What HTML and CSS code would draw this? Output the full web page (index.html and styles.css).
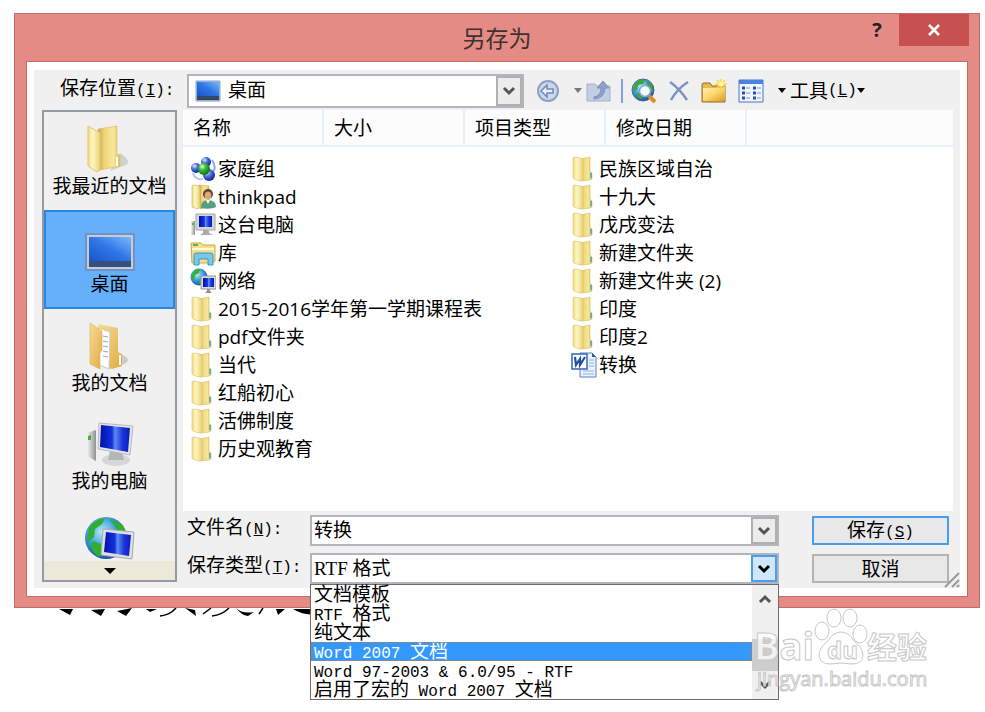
FILE: index.html
```html
<!DOCTYPE html>
<html lang="zh-CN">
<head>
  <meta charset="utf-8">
  <title>另存为</title>
  <link rel="stylesheet" href="styles.css">
</head>
<body>
  <!-- shared icons -->
  <svg class="defs" width="0" height="0" aria-hidden="true">
    <defs>
      <linearGradient id="gold" x1="0" x2="1" y1="0" y2="0">
        <stop offset="0" stop-color="#c9a544"/>
        <stop offset=".3" stop-color="#eed67c"/>
        <stop offset=".7" stop-color="#f8e79c"/>
        <stop offset="1" stop-color="#dfbd4e"/>
      </linearGradient>
      <linearGradient id="leaf" x1="0" x2="1" y1="0" y2="0">
        <stop offset="0" stop-color="#f3dc86"/>
        <stop offset=".4" stop-color="#fdf5c4"/>
        <stop offset="1" stop-color="#ecd374"/>
      </linearGradient>
      <linearGradient id="tan" x1="0" x2="1" y1="0" y2="1">
        <stop offset="0" stop-color="#f8dc92"/>
        <stop offset="1" stop-color="#e0ac45"/>
      </linearGradient>
      <linearGradient id="screen" x1="0" x2="1" y1="1" y2="0">
        <stop offset="0" stop-color="#1c55c4"/>
        <stop offset=".5" stop-color="#2e76e6"/>
        <stop offset="1" stop-color="#7db8fa"/>
      </linearGradient>
      <linearGradient id="blue" x1="0" x2="1" y1="0" y2="0">
        <stop offset="0" stop-color="#0212a8"/>
        <stop offset=".4" stop-color="#1430e0"/>
        <stop offset=".5" stop-color="#5f8af4"/>
        <stop offset=".75" stop-color="#1a35dc"/>
        <stop offset="1" stop-color="#0a1cb8"/>
      </linearGradient>
      <linearGradient id="metal" x1="0" x2="1" y1="0" y2="0">
        <stop offset="0" stop-color="#f4f4f4"/>
        <stop offset="1" stop-color="#8d9093"/>
      </linearGradient>
      <linearGradient id="amber" x1="0" x2="1" y1="0" y2="1">
        <stop offset="0" stop-color="#fff0b4"/>
        <stop offset=".5" stop-color="#fbd468"/>
        <stop offset="1" stop-color="#d99a24"/>
      </linearGradient>
      <radialGradient id="ball" cx=".35" cy=".3" r=".75">
        <stop offset="0" stop-color="#e2ecff"/>
        <stop offset=".4" stop-color="#5274dd"/>
        <stop offset="1" stop-color="#0b1f8c"/>
      </radialGradient>
      <radialGradient id="greenball" cx=".35" cy=".3" r=".75">
        <stop offset="0" stop-color="#e0ffd8"/>
        <stop offset=".4" stop-color="#38b838"/>
        <stop offset="1" stop-color="#087008"/>
      </radialGradient>
      <radialGradient id="sea" cx=".4" cy=".35" r=".7">
        <stop offset="0" stop-color="#b5eafa"/>
        <stop offset=".5" stop-color="#3c9edb"/>
        <stop offset="1" stop-color="#164a98"/>
      </radialGradient>
    </defs>
    <symbol id="i-folder" viewBox="0 0 26 26">
      <path d="M9 3 19 1v14l2 2v6l-2 1-9 1z" fill="url(#gold)" stroke="#d8ba58" stroke-width=".6"/>
      <path d="M2 2q0-1 2-1l6 1q2 1 2 3v17q0 3-3 3l-6-2q-1 0-1-2z" fill="url(#leaf)" stroke="#dcc263" stroke-width=".6"/>
      <path d="M20 17v5" stroke="#4ba9c4" stroke-width="1.6"/>
    </symbol>
    <symbol id="i-user" viewBox="0 0 26 26">
      <path d="M9 3 9 1l10 1v20l-9 3z" fill="url(#gold)" stroke="#c9ae55" stroke-width=".6"/>
      <path d="M2 2q0-1 2-1l6 1v20l-2 3-6-2z" fill="url(#leaf)" stroke="#c9ae55" stroke-width=".6"/>
      <circle cx="18" cy="10" r="5" fill="#5b4632"/>
      <ellipse cx="18" cy="11.500" rx="3.300" ry="4" fill="#dba67a"/>
      <path d="M11 24c0-6 3-8 7-8s8 2 8 7c-4 2-10 2-15 1z" fill="#579f80"/>
      <path d="M16 16l2 4 2-4z" fill="#fff"/>
    </symbol>
    <symbol id="i-home" viewBox="0 0 26 26">
      <circle cx="16" cy="6" r="5" fill="url(#ball)"/>
      <circle cx="6" cy="12" r="5" fill="url(#ball)"/>
      <circle cx="19" cy="19" r="6" fill="url(#ball)"/>
      <path d="M3 17c1 5 6 7 10 6" fill="none" stroke="#b6c8ec" stroke-width="2"/>
      <circle cx="14" cy="13" r="6" fill="url(#greenball)"/>
      <path d="M22 4c3 4 3 8 2 11" fill="none" stroke="#8ca3df" stroke-width="2"/>
    </symbol>
    <symbol id="i-pc" viewBox="0 0 26 26">
      <path d="M1 9h4v14H1z" fill="url(#metal)"/>
      <path d="M2 11h2v2H2z" fill="#35c935"/>
      <path d="M6 2h19v16H6z" fill="#d4d6d8" stroke="#a3a6a9"/>
      <path d="M9 4h13v11H9z" fill="url(#blue)"/>
      <path d="M13 18h6v3l4 2H10l3-2z" fill="#a9acaf"/>
    </symbol>
    <symbol id="i-lib" viewBox="0 0 26 26">
      <path d="M1 3h10l2 2h12v16l-3 2H2z" fill="#f3df8e" stroke="#c9a84a"/>
      <path d="M3 5h5" stroke="#4fb54f" stroke-width="2"/>
      <path d="M2 9h22" stroke="#fff8d6" stroke-width="2"/>
      <path d="M4 25V15q0-2 2-2h14q3 0 3 2v10h-5v-6H9v6z" fill="#76c7e8" stroke="#3a98c4"/>
    </symbol>
    <symbol id="i-net" viewBox="0 0 26 26">
      <circle cx="9" cy="9" r="8.500" fill="url(#sea)"/>
      <path d="M3 4q3-4 7-3l-1 4-4 2-1 5-3-1zM10 10l5-1 2 4-4 5-4-3z" fill="#31b331"/>
      <path d="M11 8h15v13H11z" fill="#d9dadc" stroke="#999"/>
      <path d="M13 10h11v9H13z" fill="url(#blue)"/>
      <path d="M17 21h3v2l2 2h-7l2-2z" fill="#8f9296"/>
    </symbol>
    <symbol id="i-word" viewBox="0 0 26 26">
      <path d="M9 1h12l4 4v20H9z" fill="#eaf2fd" stroke="#5a7fc0"/>
      <path d="M21 1v4h4z" fill="#355a9e"/>
      <path d="M18 8h5M18 11h5M18 14h5M12 19h11M12 22h11" stroke="#8fb2e3"/>
      <path d="M1 2h15v15H1z" fill="#fff" stroke="#3666b8" stroke-width="1.500"/>
      <path d="M4 5l1 8 4-6v6l5-8" fill="none" stroke="#21509f" stroke-width="2.200"/>
    </symbol>
    <symbol id="i-desk" viewBox="0 0 26 22">
      <path d="M1 1h24v20H1z" fill="#a9bdd6" stroke="#86a2c6"/>
      <path d="M2 2h22v14H2z" fill="url(#screen)"/>
      <path d="M2 16h22v4H2z" fill="#344965"/>
    </symbol>
    <symbol id="i-down" viewBox="0 0 16 12">
      <path d="M3 3l5 5 5-5" fill="none" stroke="currentColor" stroke-width="3"/>
    </symbol>
    <symbol id="i-tri" viewBox="0 0 8 6">
      <path d="M0 0h8L4 5z" fill="currentColor"/>
    </symbol>
  </svg>

  <svg class="page-ink" viewBox="0 0 256 20" aria-hidden="true">
    <path d="M0 9l11 6 3-6zM32 10l10 6 4-7zM58 11l9 5 6-8zM87 9l4 3 7-3zM126 8l10 2 1 6zM177 8q6 6 18 4l-6 4q-7-1-12-8zM217 9h9l-7 6zM234 9h22v5q-11 2-22-5z"/>
    <path d="M101 16q10-1 16-8M144 14l8-6M153 16q10-1 17-8M200 14l4-6" fill="none" stroke="#000" stroke-width="1.500"/>
  </svg>

  <main class="dialog">
    <header class="titlebar">
      <h1>另存为</h1>
      <div class="controls">
        <button class="help" aria-label="帮助">?</button>
        <button class="close" aria-label="关闭">
          <svg width="14" height="14" viewBox="0 0 14 14"><path d="M2 2l10 10M12 2L2 12" stroke="#fff" stroke-width="2.500"/></svg>
        </button>
      </div>
    </header>

    <div class="client">
      <form class="panel" onsubmit="return false">
        <div class="top">
          <label for="place">保存位置<span class="en">(<u>I</u>):</span></label>
          <div class="combo place">
            <svg class="place-icon" width="26" height="22"><use href="#i-desk"/></svg>
            <select id="place"><option>桌面</option></select>
            <span class="arrow"><svg width="16" height="12"><use href="#i-down"/></svg></span>
          </div>
          <div class="toolbar">
            <button aria-label="后退" class="back">
              <svg width="24" height="24" viewBox="0 0 24 24">
                <circle cx="12" cy="12" r="10" fill="#cdd7ea" stroke="#8b9fc8" stroke-width="2"/>
                <path d="M5 12l6-6v4h6v4h-6v4z" fill="#e9eef7" stroke="#6f87ba" stroke-width="1.500"/>
              </svg>
            </button>
            <svg class="tri gray" width="8" height="6"><use href="#i-tri"/></svg>
            <button aria-label="向上一级">
              <svg width="26" height="24" viewBox="0 0 26 24">
                <path d="M1 5h8l2 2h13v15H1z" fill="#c3cee3" stroke="#a0b0cf"/>
                <path d="M8 18q7-1 7-9h-4l6-7 6 7h-4q0 10-11 11z" fill="#8da1c8" stroke="#7f93be"/>
              </svg>
            </button>
            <i class="sep"></i>
            <button aria-label="搜索网页" class="search">
              <svg width="26" height="26" viewBox="0 0 26 26">
                <circle cx="12" cy="12" r="11" fill="url(#sea)" stroke="#546a8c"/>
                <path d="M4 5q6-5 10-3l-2 4-5 1-1 5-4 1zM16 3l5 4 1 7-4-2-2-4zM6 15l5 1v5l-4-1z" fill="#3ca53c"/>
                <path d="M18 18l6 6" stroke="#dc8e2c" stroke-width="4"/>
                <circle cx="14" cy="13" r="5.500" fill="#f2faff" stroke="#8baac2" stroke-width="1.500"/>
              </svg>
            </button>
            <button aria-label="删除" class="del">
              <svg width="22" height="22" viewBox="0 0 22 22"><path d="M2 2q9 6 17 18M20 2Q9 9 3 20" fill="none" stroke="#7b93c4" stroke-width="2.500"/></svg>
            </button>
            <button aria-label="新建文件夹" class="new">
              <svg width="26" height="24" viewBox="0 0 26 24">
                <path d="M1 6q0-2 2-2h6l2 3h13v16H1z" fill="#e9b94b" stroke="#8d6c22"/>
                <path d="M2 9h22v13H2z" fill="url(#amber)"/>
                <path d="M20 0v11M14 5h12M16 1l8 8M24 1l-8 8" stroke="#ffd62e" stroke-width="1.500"/>
                <circle cx="20" cy="5" r="2.500" fill="#fff7a8"/>
              </svg>
            </button>
            <button aria-label="视图" class="views">
              <svg width="26" height="24" viewBox="0 0 26 24">
                <path d="M1 1h24v22H1z" fill="#eff5ff" stroke="#4b74c8"/>
                <path d="M1 1h24v4H1z" fill="#4a82e6"/>
                <path d="M4 9h3M4 14h3M4 19h3M15 9h3M15 14h3M15 19h3" stroke="#2b50a8" stroke-width="3"/>
                <path d="M8 9h4M8 14h4M8 19h4M19 9h4M19 14h4M19 19h4" stroke="#8a95ab"/>
              </svg>
            </button>
            <svg class="tri" width="8" height="6"><use href="#i-tri"/></svg>
            <button class="tools">工具<span class="en">(<u>L</u>)</span><svg width="8" height="6"><use href="#i-tri"/></svg></button>
          </div>
        </div>

        <div class="middle">
          <nav class="places">
            <button class="item">
              <svg width="48" height="48" viewBox="0 0 48 48">
                <path d="M24 46l10-18q12 8 6 12z" fill="#bbb" opacity=".6"/>
                <path d="M12 4l19-3v28l3 1v11l-20 4z" fill="url(#gold)" stroke="#d6bb5e" stroke-width=".6"/>
                <path d="M2 1l12 7v37l-3 2L2 41z" fill="url(#leaf)" stroke="#dfc871"/>
                <path d="M31 32v9" stroke="#fff" stroke-width="2"/>
              </svg>
              <span>我最近的文档</span>
            </button>
            <button class="item selected">
              <svg width="50" height="48" viewBox="0 0 50 48">
                <path d="M1 11h48v36H1z" fill="#c6cbd4" stroke="#6f93c4" stroke-width="2"/>
                <path d="M4 14h42v24H4z" fill="url(#screen)"/>
                <path d="M4 38h42v6H4z" fill="#35507e"/>
              </svg>
              <span>桌面</span>
            </button>
            <button class="item">
              <svg width="48" height="48" viewBox="0 0 48 48">
                <path d="M28 46l6-14q12 4 6 9z" fill="#bbb" opacity=".7"/>
                <path d="M12 2l20 4v24l4 2v12l-10 3-12-4z" fill="url(#tan)"/>
                <path d="M13 6l11 4-1 37-10-4z" fill="#fff" stroke="#ccc"/>
                <path d="M17 14l5 1M17 19l5 1M17 24l5 1M17 29l5 1M17 34l5 1" stroke="#9aa3b3"/>
                <path d="M4 1l12 8v19l-2 3v16L4 42z" fill="url(#tan)" stroke="#d9b05a" stroke-width=".6"/>
                <path d="M34 33v10" stroke="#fff" stroke-width="2"/>
              </svg>
              <span>我的文档</span>
            </button>
            <button class="item">
              <svg width="48" height="48" viewBox="0 0 48 48">
                <path d="M1 13l9-3v31l-9-5z" fill="url(#metal)"/>
                <path d="M2 16l3-1v5H2z" fill="#3bb62e"/>
                <ellipse cx="30" cy="40" rx="14" ry="6" fill="#d5d7d9"/>
                <path d="M24 31h12l2 9H22z" fill="#b4b7ba"/>
                <path d="M13 3l34 3-3 29-32-6z" fill="#e1e2e4" stroke="#b9bbbe"/>
                <path d="M15 5l29 3-2 24-28-5z" fill="url(#blue)"/>
              </svg>
              <span>我的电脑</span>
            </button>
            <button class="item last" aria-label="网上邻居">
              <svg width="50" height="48" viewBox="0 0 50 48">
                <circle cx="21" cy="22" r="21" fill="url(#sea)"/>
                <path d="M4 12Q10 3 20 2l-3 6-7 5-1 8-7 6zM24 3l14 6 3 9-8-3-4-6zM8 25l8 3 2 9-4 4Q7 36 6 30z" fill="#2fae2f"/>
                <path d="M18 13l31 3-2 27-31-4z" fill="#dedfe2" stroke="#a7a9ae"/>
                <path d="M21 16l25 3-2 21-25-4z" fill="url(#blue)"/>
              </svg>
            </button>
            <button class="more" aria-label="更多"><svg width="12" height="8" viewBox="0 0 12 8"><path d="M0 1h12L6 7z"/></svg></button>
          </nav>

          <div class="main">
            <div class="files">
              <div class="cols">
                <span>名称</span>
                <span>大小</span>
                <span>项目类型</span>
                <span>修改日期</span>
              </div>
              <ul class="list">
                <li><svg><use href="#i-home"/></svg>家庭组</li>
                <li><svg><use href="#i-user"/></svg>thinkpad</li>
                <li><svg><use href="#i-pc"/></svg>这台电脑</li>
                <li><svg><use href="#i-lib"/></svg>库</li>
                <li><svg><use href="#i-net"/></svg>网络</li>
                <li><svg><use href="#i-folder"/></svg>2015-2016学年第一学期课程表</li>
                <li><svg><use href="#i-folder"/></svg>pdf文件夹</li>
                <li><svg><use href="#i-folder"/></svg>当代</li>
                <li><svg><use href="#i-folder"/></svg>红船初心</li>
                <li><svg><use href="#i-folder"/></svg>活佛制度</li>
                <li><svg><use href="#i-folder"/></svg>历史观教育</li>
                <li><svg><use href="#i-folder"/></svg>民族区域自治</li>
                <li><svg><use href="#i-folder"/></svg>十九大</li>
                <li><svg><use href="#i-folder"/></svg>戊戌变法</li>
                <li><svg><use href="#i-folder"/></svg>新建文件夹</li>
                <li><svg><use href="#i-folder"/></svg>新建文件夹 (2)</li>
                <li><svg><use href="#i-folder"/></svg>印度</li>
                <li><svg><use href="#i-folder"/></svg>印度2</li>
                <li><svg><use href="#i-word"/></svg>转换</li>
              </ul>
            </div>

            <div class="fields">
              <label for="filename">文件名<span class="en">(<u>N</u>):</span></label>
              <div class="combo">
                <input type="text" id="filename" value="转换">
                <span class="arrow"><svg width="16" height="12"><use href="#i-down"/></svg></span>
              </div>
              <button class="btn default">保存<span class="en">(<u>S</u>)</span></button>

              <label for="filetype">保存类型<span class="en">(<u>T</u>):</span></label>
              <div class="combo open">
                <select id="filetype"><option>RTF 格式</option></select>
                <span class="arrow"><svg width="16" height="12"><use href="#i-down"/></svg></span>
                <div class="dropdown">
                  <ul role="listbox" aria-label="保存类型">
                    <li role="option">文档模板</li>
                    <li role="option"><span class="en">RTF </span>格式</li>
                    <li role="option">纯文本</li>
                    <li role="option" class="active" aria-selected="true"><span class="en">Word 2007 </span>文档</li>
                    <li role="option"><span class="en">Word 97-2003 &amp; 6.0/95 - RTF</span></li>
                    <li role="option">启用了宏的<span class="en"> Word 2007 </span>文档</li>
                  </ul>
                  <div class="scroll">
                    <svg class="up" width="16" height="12"><use href="#i-down"/></svg>
                    <i class="thumb"></i>
                    <svg width="16" height="12"><use href="#i-down"/></svg>
                  </div>
                </div>
              </div>
              <button class="btn">取消</button>
            </div>
          </div>
        </div>
        <svg class="grip" width="16" height="16" viewBox="0 0 16 16"><path d="M1 15L15 1M8 15l7-7M13 15l2-2" stroke="#999" stroke-width="2"/></svg>
      </form>
    </div>
  </main>

  <svg class="watermark" width="184" height="88" viewBox="0 0 184 88">
    <g class="mark">
      <text x="1" y="54" class="bai">Bai</text>
      <ellipse cx="69" cy="25" rx="7" ry="9"/>
      <ellipse cx="81" cy="12" rx="7" ry="9"/>
      <ellipse cx="97" cy="12" rx="7" ry="9"/>
      <ellipse cx="107" cy="28" rx="7" ry="9"/>
      <path d="M88 26q8 0 13 9 9 7 9 15-1 8-11 8-11-2-22 0-10 0-11-9 0-7 9-14 5-9 13-9z"/>
      <text x="74" y="53" class="du">du</text>
      <text x="114" y="52" class="jy">经验</text>
      <text x="4" y="80" class="url">jingyan.baidu.com</text>
    </g>
  </svg>
</body>
</html>
```
FILE: styles.css
```css
* {
  box-sizing: border-box;
}
body {
  position: relative;
  min-height: 100vh;
  margin: 0;
  padding: 13px 5px 0 14px;
  background-color: white;
  color: black;
  font-family: "Open Sans", "Noto Sans CJK SC", sans-serif;
  font-size: 19px;
  line-height: 28px;
}
button, input, select {
  margin: 0;
  padding: 0;
  border: none;
  background: none;
  color: inherit;
  font: inherit;
}
ul {
  list-style: none;
  margin: 0;
  padding: 0;
}
svg {
  display: block;
  flex: none;
}
.defs {
  position: absolute;
}
.en {
  font-family: "Liberation Mono", monospace;
  font-size: 16px;
  white-space: pre;
}

/* window */
.dialog {
  position: relative;
  border: 1px solid #c06c6a;
  background-color: #e48b86;
  padding: 0 11px 10px;
}
.titlebar {
  display: grid;
  grid-template-columns: 1fr auto 1fr;
  align-items: center;
  height: 47px;
}
.titlebar h1 {
  grid-column: 2;
  margin: 0;
  font-size: 23px;
  font-weight: normal;
  color: #40302f;
}
.controls {
  display: flex;
  align-self: start;
  justify-content: flex-end;
  height: 32px;
  margin-right: -1px;
}
.help {
  width: 44px;
  font-size: 20px;
  font-weight: bold;
  color: #222;
}
.close {
  display: flex;
  align-items: center;
  justify-content: center;
  width: 70px;
  background-color: #c75050;
}
.client {
  border: 1px solid #c86966;
  background-color: white;
  padding: 8px 7px;
}
.panel {
  position: relative;
  background-color: #f0f0f0;
  padding: 4px 7px 4px 8px;
}

/* top row */
.top {
  display: flex;
  align-items: center;
  height: 34px;
  margin-bottom: 2px;
}
.top > label {
  width: 145px;
  padding-left: 18px;
  margin-bottom: 4px;
  white-space: nowrap;
}
.combo {
  position: relative;
  display: flex;
  border: 2px solid #b4b5ba;
  background-color: white;
  height: 31px;
}
.combo select, .combo input {
  flex: 1;
  min-width: 0;
  padding-left: 2px;
  appearance: none;
  outline: none;
  font-family: "Liberation Serif", "Noto Sans CJK SC", serif;
}
.arrow {
  display: flex;
  align-items: center;
  justify-content: center;
  width: 26px;
  border: 2px solid #b0b0b0;
  background-color: #ececec;
  color: #555;
  pointer-events: none;
}
.place {
  flex: 0 1 337px;
  height: 34px;
}
.place-icon {
  align-self: center;
  margin: 0 5px 0 6px;
}
.toolbar {
  display: flex;
  align-items: center;
  margin-left: 12px;
}
.tri {
  margin-left: 14px;
  margin-right: 4px;
}
.gray {
  color: #777;
}
.sep {
  width: 2px;
  height: 24px;
  margin: 0 8px 0 9px;
  background-color: #7ba3dd;
}
.del, .new, .views {
  margin-left: 11px;
}
.tools {
  display: flex;
  align-items: center;
}

/* places bar */
.middle {
  display: grid;
  grid-template-columns: 135px minmax(0, 1fr);
  gap: 6px;
}
.places {
  display: flex;
  flex-direction: column;
  border: 2px solid #9599a1;
  margin: 0 0 2px;
}
.item {
  display: flex;
  flex-direction: column;
  align-items: center;
  height: 98px;
  padding-top: 13px;
  line-height: 26px;
}
.selected {
  border: 2px solid #2a86e2;
  background-color: #66affa;
  height: 99px;
  padding-top: 11px;
}
.last {
  height: 56px;
  padding-top: 11px;
  overflow: hidden;
}
.more {
  display: flex;
  flex: 1;
  align-items: center;
  justify-content: center;
  background-color: #ece9d8;
}

/* file list */
.files {
  height: 401px;
  background-color: white;
}
.cols {
  display: flex;
  height: 37px;
  border-bottom: 2px solid #eaf2fb;
  background-color: #fcfcfc;
  line-height: 36px;
}
.cols span {
  width: 141px;
  padding-left: 10px;
  border-right: 2px solid #e6f0fa;
}
.list {
  display: grid;
  grid-template-rows: repeat(11, 28px);
  grid-auto-flow: column;
  grid-auto-columns: 381px;
  padding: 8px 0 0 7px;
}
.list li {
  display: flex;
  align-items: center;
  gap: 2px;
  white-space: nowrap;
}
.list svg {
  width: 26px;
  height: 26px;
}

/* name, type and buttons */
.fields {
  display: grid;
  grid-template-columns: 123px minmax(0, 1fr) 170px;
  row-gap: 7px;
  padding: 4px 4px 0;
}
.fields label {
  line-height: 24px;
  white-space: nowrap;
}
.btn {
  margin: 1px 0 0 33px;
  height: 29px;
  border: 2px solid #b3b3b3;
  background-color: #e8e8e8;
  line-height: 24px;
}
.default {
  border-color: #4a9cf0;
}
.open .arrow {
  border-color: #4a9cf0;
  background-color: #cfe6fb;
  color: black;
}
.dropdown {
  position: absolute;
  z-index: 1;
  top: 29px;
  left: -2px;
  right: -2px;
  display: flex;
  border: 1px solid #6b6b6b;
  background-color: white;
  line-height: 19px;
}
.dropdown ul {
  flex: 1;
}
.dropdown li {
  height: 19px;
  padding-left: 3px;
  white-space: nowrap;
}
.dropdown .active {
  background-color: #3399ff;
  color: white;
  outline: 1px dotted #c87a30;
  outline-offset: -1px;
}
.scroll {
  display: flex;
  flex-direction: column;
  align-items: center;
  justify-content: space-between;
  width: 26px;
  padding: 8px 0;
  background-color: #f0f0f0;
  color: #555;
}
.up {
  transform: rotate(180deg);
}
.thumb {
  width: 26px;
  height: 32px;
  margin-top: 26px;
  background-color: #cdcdcd;
}
.grip {
  position: absolute;
  right: 0;
  bottom: 0;
}

/* document under the dialog */
.page-ink {
  position: absolute;
  left: 59px;
  top: 600px;
  width: 256px;
  height: 20px;
}
.watermark {
  position: absolute;
  z-index: 2;
  left: 753px;
  top: 606px;
  pointer-events: none;
}
.mark {
  fill: white;
  fill-opacity: .75;
  stroke: #c8c8c8;
  stroke-width: 1px;
  font-weight: bold;
}
.bai {
  font-family: "Open Sans", sans-serif;
  font-size: 38px;
}
.du {
  font-family: "Open Sans", sans-serif;
  font-size: 24px;
}
.jy {
  font-family: "Noto Sans CJK SC", sans-serif;
  font-size: 30px;
}
.url {
  font-family: "Open Sans", sans-serif;
  font-size: 20px;
  font-weight: normal;
}
```
